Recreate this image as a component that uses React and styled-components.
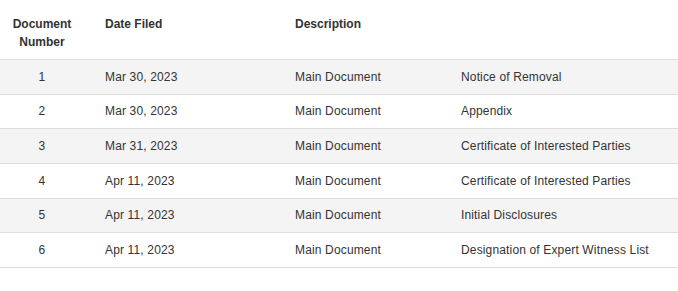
import React from 'react'
import styled, { createGlobalStyle } from 'styled-components'

const GlobalStyle = createGlobalStyle`
  body {
    margin: 0;
    background: #ffffff;
    font-family: "Liberation Sans", Arial, sans-serif;
  }
`;

const DocketTable = styled.table`
  width: 678px;
  border-collapse: collapse;
  font-family: "Liberation Sans", Arial, sans-serif;
  font-size: 12px;
  color: #333333;
`;

const HeadCell = styled.th`
  text-align: ${p => (p.$center ? 'center' : 'left')};
  vertical-align: top;
  font-weight: bold;
  line-height: 18px;
  padding: 15px ${p => (p.$center ? '8px' : '0')} 8px ${p => (p.$center ? '8px' : '21px')};
  width: ${p => p.$width || 'auto'};
  border-bottom: 1px solid #dddddd;
  box-sizing: border-box;
`;

const Row = styled.tr`
  height: 34.67px;
  background: ${p => (p.$striped ? '#f4f4f4' : '#ffffff')};
  border-bottom: 1px solid #dddddd;
`;

const Cell = styled.td`
  text-align: ${p => (p.$center ? 'center' : 'left')};
  vertical-align: middle;
  line-height: 18px;
  letter-spacing: 0.15px;
  padding: 0 ${p => (p.$center ? '8px' : '0')} 0 ${p => (p.$center ? '8px' : '21px')};
  white-space: nowrap;
`;

const entries = [
  { num: 1, date: 'Mar 30, 2023', type: 'Main Document', title: 'Notice of Removal' },
  { num: 2, date: 'Mar 30, 2023', type: 'Main Document', title: 'Appendix' },
  { num: 3, date: 'Mar 31, 2023', type: 'Main Document', title: 'Certificate of Interested Parties' },
  { num: 4, date: 'Apr 11, 2023', type: 'Main Document', title: 'Certificate of Interested Parties' },
  { num: 5, date: 'Apr 11, 2023', type: 'Main Document', title: 'Initial Disclosures' },
  { num: 6, date: 'Apr 11, 2023', type: 'Main Document', title: 'Designation of Expert Witness List' },
];

export default function App() {
  return (
    <>
      <GlobalStyle />
      <DocketTable>
        <thead>
          <tr>
            <HeadCell $center $width="84px">Document<br />Number</HeadCell>
            <HeadCell $width="190px">Date Filed</HeadCell>
            <HeadCell $width="166px">Description</HeadCell>
            <HeadCell></HeadCell>
          </tr>
        </thead>
        <tbody>
          {entries.map((e, i) => (
            <Row key={e.num} $striped={i % 2 === 0}>
              <Cell $center>{e.num}</Cell>
              <Cell>{e.date}</Cell>
              <Cell>{e.type}</Cell>
              <Cell>{e.title}</Cell>
            </Row>
          ))}
        </tbody>
      </DocketTable>
    </>
  );
}
